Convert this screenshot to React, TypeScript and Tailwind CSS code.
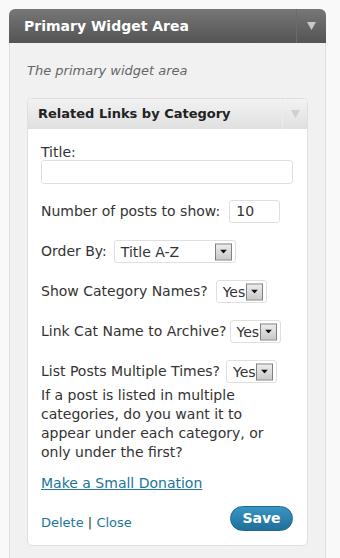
const font = "font-['DejaVu_Sans',Verdana,sans-serif]";

function DropButton() {
  return (
    <span className="absolute right-[3px] top-1/2 flex h-[17px] w-[17px] -translate-y-1/2 items-center justify-center border border-[#808080] bg-gradient-to-b from-[#ececec] to-[#c9c9c9]">
      <svg width="7" height="4" viewBox="0 0 7 4">
        <path d="M0 0h7L3.5 4z" fill="#111" />
      </svg>
    </span>
  );
}

function Select({ value, width }: { value: string; width: string }) {
  return (
    <span
      className={`relative flex h-[23px] shrink-0 items-center rounded-[3px] border border-[#dfdfdf] bg-white pl-[6px] ${width}`}
    >
      <span className="leading-none">{value}</span>
      <DropButton />
    </span>
  );
}

function Row({ label, gap, children }: { label: string; gap: string; children: React.ReactNode }) {
  return (
    <div className={`mt-[17px] flex h-[23px] items-center ${gap}`}>
      <span>{label}</span>
      {children}
    </div>
  );
}

export default function App() {
  return (
    <div className={`h-[558px] w-[340px] overflow-hidden bg-[#f9f9f9] pt-[9px] ${font}`}>
      <div className="ml-[9px] w-[317px]">
        {/* Sidebar header */}
        <div className="flex h-[34px] items-stretch rounded-t-[6px] bg-gradient-to-b from-[#777] to-[#545454]">
          <h3 className="flex flex-1 items-center pl-[15px] text-[14px] font-bold text-white">
            Primary Widget Area
          </h3>
          <div className="flex w-[30px] items-center justify-center border-l border-[#6a6a6a]">
            <svg width="9" height="8" viewBox="0 0 9 8">
              <path d="M0 0h9L4.5 8z" fill="#c8c8c8" />
            </svg>
          </div>
        </div>

        {/* Sidebar body */}
        <div className="h-[520px] border-x border-[#dfdfdf] bg-[#f1f1f1] px-[17px] pt-[19px]">
          <p className="text-[13px] leading-[18px] italic text-[#666]">The primary widget area</p>

          <div className="mt-[18px] rounded-[5px] border border-[#dfdfdf] bg-white text-[14px] text-[#333]">
            <div className="flex h-[30px] items-stretch rounded-t-[5px] bg-gradient-to-b from-[#f2f2f2] to-[#e0e0e0]">
              <h4 className="flex flex-1 items-center pl-[10px] text-[13px] font-bold text-[#222]">
                Related Links by Category
              </h4>
              <div className="flex w-[25px] items-center justify-center border-l border-[#ececec]">
                <svg width="9" height="8" viewBox="0 0 9 8">
                  <path d="M0 0h9L4.5 8z" fill="#cfcfcf" />
                </svg>
              </div>
            </div>

            <div className="px-[13px] pb-[12px] pt-[15px]">
              <div className="leading-[16px]">Title:</div>
              <div className="h-[24px] w-[252px] rounded-[3px] border border-[#dfdfdf] bg-white" />

              <div className="mt-[16px] flex h-[23px] items-center gap-[9px]">
                <span>Number of posts to show:</span>
                <span className="flex h-[23px] w-[51px] items-center rounded-[3px] border border-[#dfdfdf] bg-white pl-[6px]">
                  10
                </span>
              </div>

              <Row label="Order By:" gap="gap-[7px]">
                <Select value="Title A-Z" width="w-[122px]" />
              </Row>
              <Row label="Show Category Names?" gap="gap-[8px]">
                <Select value="Yes" width="w-[51px]" />
              </Row>
              <Row label="Link Cat Name to Archive?" gap="gap-[3px]">
                <Select value="Yes" width="w-[51px]" />
              </Row>
              <Row label="List Posts Multiple Times?" gap="gap-[6px]">
                <Select value="Yes" width="w-[51px]" />
              </Row>

              <p className="mt-[3px] w-[252px] leading-[19px]">
                If a post is listed in multiple categories, do you want it to appear under each
                category, or only under the first?
              </p>

              <a href="#" className="mt-[12px] block leading-[19px] text-[#21759b] underline">
                Make a Small Donation
              </a>

              <div className="mt-[13px] flex items-start justify-between">
                <div className="mt-[7px] text-[13px] text-[#21759b]">
                  Delete <span className="text-[#333]">|</span> Close
                </div>
                <button className="mr-[1px] h-[25px] w-[63px] rounded-full border border-[#1e6b92] bg-gradient-to-b from-[#3a94c3] to-[#1f6f9a] text-[14px] font-bold text-white">
                  Save
                </button>
              </div>
            </div>
          </div>
        </div>
      </div>
    </div>
  );
}
